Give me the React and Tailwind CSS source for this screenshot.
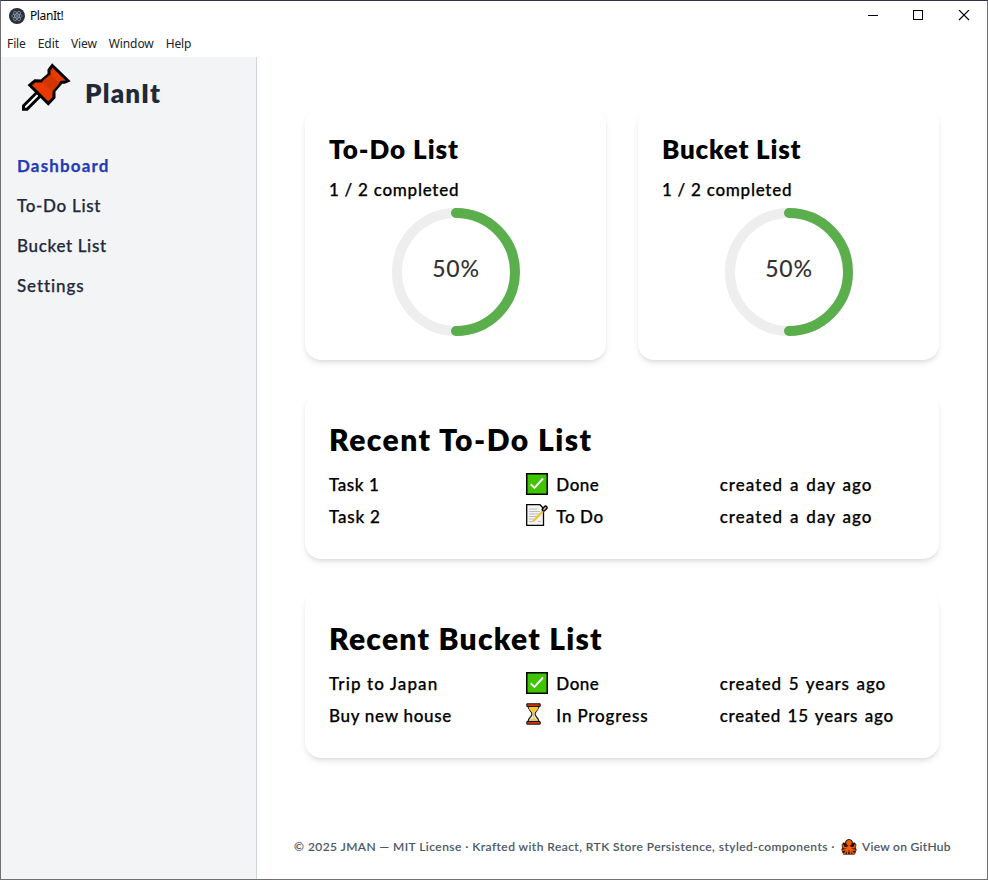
import React from "react";

const navItems = [
  ["To-Do List", "tracking-[0.7px]"],
  ["Bucket List", "tracking-[0.65px]"],
  ["Settings", "tracking-[0.9px]"],
];

function ElectronIcon() {
  return (
    <svg width="16" height="16" viewBox="0 0 16 16" fill="none">
      <circle cx="8" cy="8" r="8" fill="#2b2e3b" />
      <g stroke="#8fa9b3" strokeWidth="0.7">
        <ellipse cx="8" cy="8" rx="5.300" ry="2" transform="rotate(0 8 8)" />
        <ellipse cx="8" cy="8" rx="5.300" ry="2" transform="rotate(60 8 8)" />
        <ellipse cx="8" cy="8" rx="5.300" ry="2" transform="rotate(120 8 8)" />
      </g>
      <circle cx="8" cy="8" r="0.8" fill="#9fd0dc" />
    </svg>
  );
}

function PinIcon() {
  return (
    <svg width="52" height="50" viewBox="1 0 52 50">
      <path d="M3.500 47.200V43.800L17 30.300L20.500 33.800L7 47.200Z" fill="#fff" stroke="#000" strokeWidth="3" />
      <path d="M32.300 3.500L48 18.800L44.500 20.300H41.500L34 29V35.500L28.300 41.500L9.800 23L15 18.800L21.500 19L29 12.500V8Z" fill="#e83a00" stroke="#000" strokeWidth="3" />
      <path d="M30 12.500L39.500 21L32.500 29.500L22 19.500Z" fill="#cf3600" />
    </svg>
  );
}

function CheckIcon() {
  return (
    <svg width="22" height="22" viewBox="0 0 22 22">
      <rect x="0.75" y="0.75" width="20.500" height="20.500" fill="#3fc400" stroke="#000" strokeWidth="1.500" />
      <path d="M4.700 11.300L8.500 15L17 5.500" fill="none" stroke="#fff" strokeWidth="1.900" />
    </svg>
  );
}

function MemoIcon() {
  return (
    <svg width="22" height="22" viewBox="0 0 22 22" fill="none">
      <path d="M0.700 0.700H14L17.500 4.500V21.300H0.700Z" fill="#f4f4f4" stroke="#000" strokeWidth="1.300" />
      <path d="M3 5H11M3 7.500H14M3 10H13M3 12.500H11M3 15H8M3 17.500H7M12 17.500H15" stroke="#bcbcbc" />
      <path d="M7 17.500L18 6" stroke="#f4c534" strokeWidth="2.200" />
      <path d="M17.800 5.500L19.500 3.700" stroke="#000" strokeWidth="4.400" strokeLinecap="round" />
      <path d="M18 5.500L19.500 3.700" stroke="#d49a88" strokeWidth="1.800" strokeLinecap="round" />
    </svg>
  );
}

function HourglassIcon() {
  return (
    <svg width="22" height="22" viewBox="0 0 22 22">
      <path d="M2 3C2 7 6 8 6 11S2 15 2 18.500H13C13 15 9 14 9 11S13 7 13 3Z" fill="#f1f1f1" stroke="#222" strokeWidth="1.300" />
      <path d="M2.700 4H12.300C12 7.500 8.500 8.500 8.200 11V15L12 17.500H3L6.800 15V11C6.500 8.500 3 7.500 2.700 4Z" fill="#fcc63a" />
      <path d="M0.800 0.800H14.200V3.400H0.800ZM0.800 18.600H14.200V21.200H0.800Z" fill="#e53b0c" stroke="#111" strokeWidth="1" />
    </svg>
  );
}

function OctopusIcon() {
  return (
    <svg width="16" height="16" viewBox="0 0 16 16" fill="none" strokeLinecap="round" strokeLinejoin="round">
      <path d="M8 0.500C10.800 0.500 11.800 2.200 11.500 4.300L13.500 3.800L15 5.500L14.500 9L15.300 10.500L14.500 13L13.500 15.300H2.500L1.500 13L0.700 10.500L1.500 9L1 5.500L2.500 3.800L4.500 4.300C4.200 2.200 5.200 0.500 8 0.500Z" fill="#1c0b02" stroke="#1c0b02" strokeWidth="0.6" />
      <path d="M8 1C10.200 1 11 2.500 10.700 4.400L9.900 7L11 11H5L6.100 7L5.300 4.400C5 2.500 5.800 1 8 1Z" fill="#f25c05" />
      <path d="M5.500 8.800H3L2 6M10.500 8.800H13L14 6M5.500 10.500L2 11.300M10.500 10.500L14 11.300M5.800 11L4 14.200H3M10.200 11L12 14.200H13M7 11L6.500 14.300M9 11L9.500 14.300" stroke="#f25c05" strokeWidth="1.500" />
      <path d="M6.600 6.300V7.100M9.400 6.300V7.100" stroke="#1c0b02" strokeWidth="0.8" />
    </svg>
  );
}

function TitleBar() {
  return (
    <header className="h-14 shrink-0 font-['Noto_Sans'] text-[12px] font-normal text-black">
      <div className="flex h-[29px] items-center pl-2">
        <ElectronIcon />
        <span className="ml-[5px] tracking-[-0.4px]">PlanIt!</span>
        <div className="ml-auto flex pr-[17px]">
          <svg width="102" height="12" viewBox="0 0 102 12" fill="none" stroke="#000" shapeRendering="crispEdges">
            <path d="M0 5.500H10M45.500 0.500H54.500V9.500H45.500Z" />
            <path d="M91 0L101 10M101 0L91 10" shapeRendering="auto" strokeWidth="1.100" />
          </svg>
        </div>
      </div>
      <nav className="flex h-[27px] items-center gap-3 pl-1.5 tracking-[-0.1px] text-[#222]">
        <span>File</span><span>Edit</span><span>View</span><span>Window</span><span>Help</span>
      </nav>
    </header>
  );
}

function ProgressCard({ title, titleTracking }) {
  return (
    <section className="h-[253px] flex-1 rounded-2xl bg-white px-6 pt-6 shadow-md">
      <h2 className={`h-9 text-[26px] leading-9 font-extrabold ${titleTracking}`}>{title}</h2>
      <p className="mt-[11px] h-6 text-[17px] leading-6 tracking-[0.73px] [-webkit-text-stroke:0.25px]">1 / 2 completed</p>
      <div className="mt-1.5 flex justify-center">
        <svg width="128" height="128" viewBox="0 0 128 128" fill="none">
          <circle cx="64" cy="64" r="59" stroke="#eeeeee" strokeWidth="10" />
          <path d="M64 5A59 59 0 0 1 64 123" stroke="#5aae4b" strokeWidth="10" strokeLinecap="round" />
          <text x="64" y="69" textAnchor="middle" fill="#333" className="text-[23px] tracking-[0.7px]">50%</text>
        </svg>
      </div>
    </section>
  );
}

function RecentCard({ title, titleTracking, rows }) {
  return (
    <section className="h-[167px] rounded-2xl bg-white px-6 pt-[27px] shadow-md">
      <h2 className={`h-10 text-[30px] leading-10 font-extrabold ${titleTracking}`}>{title}</h2>
      <div className="mt-2.5 text-[17px] [-webkit-text-stroke:0.25px]">
        {rows.map(([name, nameTracking, Icon, state, stateTracking, created, createdTracking]) => (
          <div key={name} className="grid h-[31.5px] grid-cols-3 items-center">
            <span className={nameTracking}>{name}</span>
            <span className={`flex items-center gap-2 pl-0.5 ${stateTracking}`}>
              <span className="mb-0.5"><Icon /></span>{state}
            </span>
            <span className={createdTracking}>{created}</span>
          </div>
        ))}
      </div>
    </section>
  );
}

export default function App() {
  return (
    <div className="flex h-[880px] w-[988px] flex-col overflow-hidden border border-[#707070] border-t-[#30334a] bg-white font-['Lato',sans-serif] font-medium text-black">
      <TitleBar />
      <div className="flex min-h-0 flex-1">
        <aside className="w-64 border-r border-gray-300 bg-gray-100 text-gray-800">
          <div className="flex items-center gap-3 pt-[5px] pl-5">
            <PinIcon />
            <h1 className="mt-[11px] text-[26px] leading-9 font-extrabold tracking-[1.2px]">PlanIt</h1>
          </div>
          <nav className="mt-[42px] flex flex-col gap-4 pl-4 text-[17px] leading-6 [-webkit-text-stroke:0.25px]">
            <span className="font-bold tracking-[1.15px] text-[#243bb8]">Dashboard</span>
            {navItems.map(([item, tracking]) => <span key={item} className={tracking}>{item}</span>)}
          </nav>
        </aside>
        <main className="flex-1 px-12 pt-[50px]">
          <div className="flex gap-8">
            <ProgressCard title="To-Do List" titleTracking="tracking-[0.95px]" />
            <ProgressCard title="Bucket List" titleTracking="tracking-[0.8px]" />
          </div>
          <div className="mt-8 flex flex-col gap-8">
            <RecentCard
              title="Recent To-Do List"
              titleTracking="tracking-[1.45px]"
              rows={[
                ["Task 1", "tracking-[0.6px]", CheckIcon, "Done", "tracking-[0.5px]", "created a day ago", "tracking-[1.05px] [word-spacing:1.5px]"],
                ["Task 2", "tracking-[0.8px]", MemoIcon, "To Do", "tracking-[0.6px]", "created a day ago", "tracking-[1.05px] [word-spacing:1.5px]"],
              ]}
            />
            <RecentCard
              title="Recent Bucket List"
              titleTracking="tracking-[1.25px]"
              rows={[
                ["Trip to Japan", "tracking-[1.1px]", CheckIcon, "Done", "tracking-[0.5px]", "created 5 years ago", "tracking-[0.9px] [word-spacing:1.5px]"],
                ["Buy new house", "tracking-[0.7px]", HourglassIcon, "In Progress", "tracking-[0.85px]", "created 15 years ago", "tracking-[0.75px] [word-spacing:1.5px]"],
              ]}
            />
          </div>
          <footer className="mt-20 -mx-3 flex items-center pl-px text-[12px] tracking-[0.45px] whitespace-nowrap text-gray-600 [-webkit-text-stroke:0.15px]">
            © 2025 JMAN — MIT License · Krafted with React, RTK Store Persistence, styled-components ·
            <span className="ml-1.5 flex items-center gap-[5px] tracking-[0.3px]"><OctopusIcon />View on GitHub</span>
          </footer>
        </main>
      </div>
    </div>
  );
}
